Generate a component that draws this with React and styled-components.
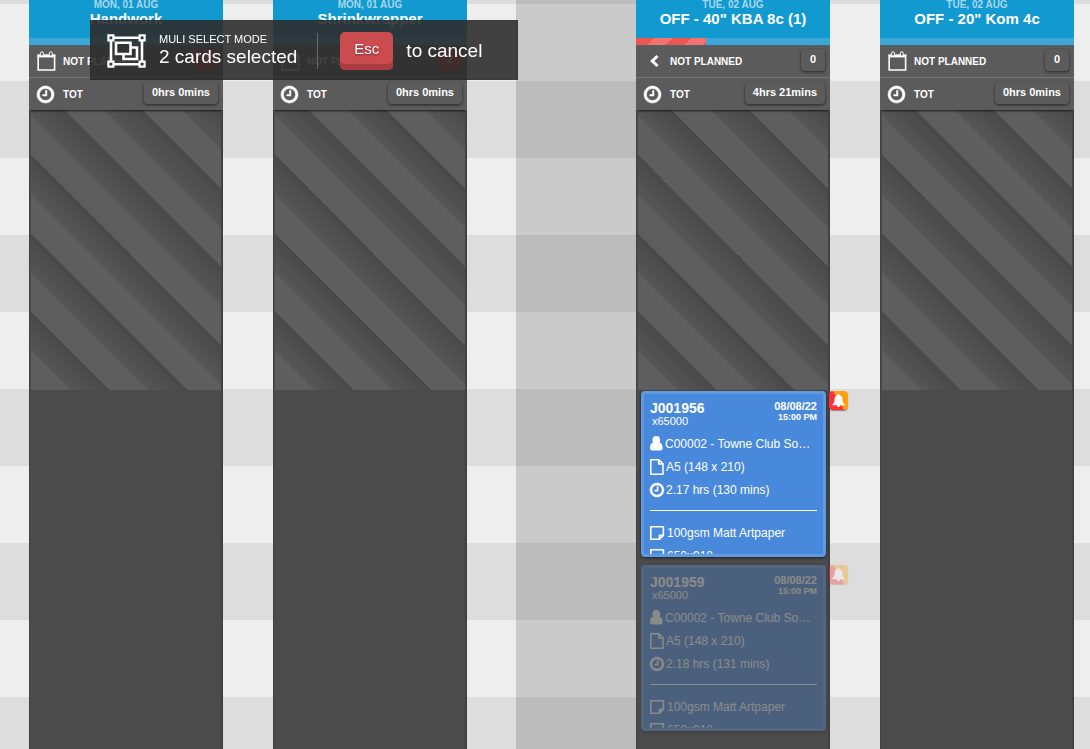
import React from "react";
import styled, { createGlobalStyle } from "styled-components";

const GlobalStyle = createGlobalStyle`
  * {
    box-sizing: border-box;
  }
  body {
    margin: 0;
    font-family: "Liberation Sans", Arial, sans-serif;
    color: white;
  }
`;

const Board = styled.main`
  display: flex;
  min-height: 100vh;
  padding: 0 16px 0 29px;
  overflow: hidden;
  background: repeating-linear-gradient(#ddd 0 77px, #eee 77px 154px) 0 -73px /
    100% calc(100% + 73px);
`;

const Column = styled.section`
  flex: 1 0 194px;
  display: flex;
  flex-direction: column;
  margin-right: ${(props) => props.$gap || 0}px;
  background-color: #4b4b4b;
`;

const DayGap = styled.div`
  flex: 0 0 120px;
  background-color: rgba(0, 0, 0, 0.15);
`;

const ColumnHeader = styled.header`
  height: 38px;
  text-align: center;
  background-color: #1199d0;
`;

const ColumnDate = styled.div`
  font-size: 10px;
  font-weight: bold;
  line-height: 10px;
  color: #a5d8ee;
`;

const ColumnTitle = styled.h2`
  margin: 0;
  font-size: 15px;
  line-height: 18px;
`;

const Progress = styled.div`
  height: 8px;
  background-color: #3da8d8;
  border-bottom: 1px solid #4a6470;
`;

const ProgressBar = styled.div`
  height: 7px;
  background: repeating-linear-gradient(
    135deg,
    #f0544f 0 13px,
    #f5736e 13px 26px
  );
`;

const Summary = styled.div`
  position: relative;
  background-color: #5b5b5b;
  box-shadow: 0 3px 2px -2px rgba(0, 0, 0, 0.7);
`;

const SummaryRow = styled.div`
  display: flex;
  height: 31px;
  padding: 3px 5px 0 8px;
  font-size: 10px;
  font-weight: bold;
  line-height: 25px;

  & + & {
    height: 33px;
    padding-top: 4px;
    border-top: 1px solid #757575;
  }
`;

const SummaryIcon = styled.span`
  display: flex;
  align-items: center;
  width: 26px;
  height: 24px;
`;

const Badge = styled.span`
  min-width: 24px;
  height: 22px;
  margin-left: auto;
  padding: 0 8px;
  border-radius: 4px;
  font-size: 11px;
  line-height: 20px;
  text-align: center;
  background-color: ${(props) => (props.$alert ? "#e02020" : "#5b5b5b")};
  box-shadow: 0 1px 3px rgba(0, 0, 0, 0.6);
`;

const ColumnBody = styled.div`
  flex: 1;
  border: 1px solid #414141;
  border-width: 0 2px 0 1px;
`;

const Unavailable = styled.div`
  height: 280px;
  margin-left: 1px;
  background: repeating-linear-gradient(
    45deg,
    #5e5e5e 0,
    #5e5e5e calc(100% / 12),
    #565656 calc(100% / 12),
    #494949 calc(100% / 6)
  );
`;

const Cards = styled.div`
  display: flex;
  flex-direction: column;
  gap: 8px;
  padding: 1px 2px 18px 4px;
`;

const CardWrap = styled.article`
  position: relative;
  opacity: ${(props) => (props.$faded ? 0.35 : 1)};
`;

const CardBox = styled.div`
  height: 166px;
  padding: 6px;
  overflow: hidden;
  border: 3px solid #5f9ae3;
  border-radius: 4px;
  background-color: #4989db;
  box-shadow: 0 1px 3px rgba(0, 0, 0, 0.6);
`;

const CardTop = styled.div`
  display: flex;
  justify-content: space-between;
  height: 32px;
`;

const JobNumber = styled.h3`
  margin: 0;
  font-size: 14px;
  line-height: 16px;
`;

const Quantity = styled.div`
  padding-left: 2px;
  font-size: 11px;
  line-height: 11px;
`;

const Due = styled.div`
  font-size: 11px;
  font-weight: bold;
  line-height: 12px;
  text-align: right;
`;

const DueTime = styled.div`
  font-size: 9px;
  line-height: 10px;
`;

const CardLine = styled.div`
  display: flex;
  align-items: center;
  gap: 2px;
  height: 23px;
  font-size: 12px;
  white-space: nowrap;
`;

const Rule = styled.hr`
  height: 1px;
  margin: 9px 0 10px;
  border: 0;
  background-color: white;
`;

const Alarm = styled.button`
  position: absolute;
  top: 0;
  left: calc(100% + 3px);
  display: flex;
  align-items: center;
  justify-content: center;
  width: 19px;
  height: 19px;
  padding: 0;
  border: 0;
  border-radius: 4px;
  background: linear-gradient(60deg, #ff3038 50%, #ffa012 50%);
  box-shadow: 0 1px 1px rgba(0, 0, 0, 0.4);
`;

const Toast = styled.div`
  position: fixed;
  top: 20px;
  left: 90px;
  z-index: 2;
  display: flex;
  align-items: center;
  width: 428px;
  height: 60px;
  padding: 2px 17px 0;
  background-color: rgba(45, 45, 45, 0.9);
  box-shadow: inset 0 0 1px rgba(0, 0, 0, 0.8);
`;

const ToastText = styled.div`
  margin-left: 13px;
  padding-right: 20px;
  border-right: 1px solid #6a6a6a;
`;

const ToastMode = styled.div`
  font-size: 11px;
  line-height: 12px;
`;

const ToastCount = styled.div`
  font-size: 19px;
  line-height: 24px;
  white-space: nowrap;
`;

const EscKey = styled.button`
  width: 53px;
  height: 38px;
  margin: 0 13px 0 22px;
  padding: 0 0 6px;
  border: 0;
  border-radius: 5px;
  font-family: inherit;
  font-size: 15px;
  color: white;
  text-shadow: 0 1px 2px rgba(0, 0, 0, 0.5);
  background-color: #ca4c4f;
  box-shadow: inset 0 -6px 0 #ab3b3f;
`;

const ToastHint = styled.span`
  font-size: 19px;
`;

const ClockIcon = ({ size }) => (
  <svg
    width={size}
    height={size}
    viewBox="128 128 1536 1536"
    fill="currentColor"
    stroke="currentColor"
    strokeWidth="50"
    overflow="visible"
  >
    <path d="M1024 544v448q0 14-9 23t-23 9h-320q-14 0-23-9t-9-23v-64q0-14 9-23t23-9h224v-352q0-14 9-23t23-9h64q14 0 23 9t9 23zm416 352q0-148-73-273t-198-198-273-73-273 73-198 198-73 273 73 273 198 198 273 73 273-73 198-198 73-273zm224 0q0 209-103 385.5t-279.5 279.5-385.5 103-385.5-103-279.5-279.5-103-385.5 103-385.5 279.5-279.5 385.5-103 385.5 103 279.5 279.5 103 385.5z" />
  </svg>
);

const CalendarIcon = () => (
  <svg width="19" height="20" viewBox="0 0 19 20" fill="none" stroke="currentColor">
    <path d="M1.2 4.500h16.400v14.500H1.200z" strokeWidth="1.6" />
    <path d="M.5 3.400h17.800v3H.5z" fill="currentColor" stroke="none" />
    <rect x="3.6" y="0.8" width="2.8" height="4.2" rx="1.3" fill="#5b5b5b" />
    <rect x="12.4" y="0.8" width="2.8" height="4.2" rx="1.3" fill="#5b5b5b" />
  </svg>
);

const ChevronIcon = () => (
  <svg width="19" height="14" viewBox="0 0 19 14" fill="none" stroke="currentColor">
    <path d="M13.500 2 8.300 7l5.200 5" strokeWidth="3" />
  </svg>
);

const UserIcon = () => (
  <svg width="13" height="15" viewBox="0 0 13 15" fill="currentColor">
    <ellipse cx="6.3" cy="4.3" rx="3.8" ry="4.2" />
    <path d="M3 6.800c-2.200.3-3 2.700-3 5.200C0 13.600.8 14.400 2.200 14.400h8.200c1.400 0 2.200-.8 2.200-2.400 0-2.500-.8-4.900-3-5.200-1.800 1.700-4.800 1.700-6.600 0z" />
  </svg>
);

const FileIcon = () => (
  <svg width="14" height="16" viewBox="0 0 14 16" fill="none" stroke="currentColor" strokeWidth="1.5" strokeLinejoin="round">
    <path d="M.8.8h8l4.200 4.100v10.300H.8zM8.700.8v4.300H13" />
  </svg>
);

const NoteIcon = () => (
  <svg width="15" height="14" viewBox="0 0 15 14" fill="none" stroke="currentColor" strokeWidth="1.6" strokeLinejoin="round">
    <path d="M.8.8h12.600v8.600l-4 3.800H.8zM13.200 9.400H9.400v3.800" />
  </svg>
);

const BellIcon = () => (
  <svg width="13" height="14" viewBox="0 0 13 14" fill="white">
    <path d="M6.500 0c.7 0 1 .5 1 1 1.900.5 2.900 2 2.900 4 0 3 .9 4.300 2.100 5.300v.9H.5v-.9C1.700 9.300 2.600 8 2.600 5c0-2 1-3.500 2.900-4 0-.5.3-1 1-1zM4.900 11.200h3.200c0 1.300-.7 1.900-1.600 1.900s-1.600-.6-1.600-1.900z" />
  </svg>
);

const GroupIcon = () => (
  <svg width="39" height="34" viewBox="0 0 39 34" fill="none" stroke="currentColor" strokeWidth="2.6">
    <path d="M7 3.800h25M7 30.200h25M4 7v20M35 7v20" />
    <path d="M1.400 1.400h5v5h-5zM32.600 1.400h5v5h-5zM1.400 27.600h5v5h-5zM32.600 27.600h5v5h-5z" strokeWidth="2.2" />
    <path d="M9 8.700h14.500v11.300H9zM23.500 13.500h6.500v11.500H16.500v-5" />
  </svg>
);

const columns = [
  { date: "MON, 01 AUG", title: "Handwork", planned: 2, alert: true, total: "0hrs 0mins", gap: 50 },
  { date: "MON, 01 AUG", title: "Shrinkwrapper", planned: 2, alert: true, total: "0hrs 0mins", gap: 49, dayEnd: true },
  {
    date: "TUE, 02 AUG",
    title: 'OFF - 40" KBA 8c (1)',
    planned: 0,
    total: "4hrs 21mins",
    gap: 50,
    progress: 36,
    back: true,
    cards: [
      { job: "J001956", hours: "2.17 hrs (130 mins)" },
      { job: "J001959", hours: "2.18 hrs (131 mins)", faded: true },
    ],
  },
  { date: "TUE, 02 AUG", title: 'OFF - 20" Kom 4c', planned: 0, total: "0hrs 0mins" },
];

const JobCard = ({ card }) => (
  <CardWrap $faded={card.faded}>
    <CardBox>
      <CardTop>
        <div>
          <JobNumber>{card.job}</JobNumber>
          <Quantity>x65000</Quantity>
        </div>
        <Due>
          08/08/22
          <DueTime>15:00 PM</DueTime>
        </Due>
      </CardTop>
      <CardLine>
        <UserIcon /> C00002 - Towne Club So…
      </CardLine>
      <CardLine>
        <FileIcon /> A5 (148 x 210)
      </CardLine>
      <CardLine>
        <ClockIcon size={14} /> {card.hours}
      </CardLine>
      <Rule />
      <CardLine>
        <NoteIcon /> 100gsm Matt Artpaper
      </CardLine>
      <CardLine>
        <NoteIcon /> 650x910
      </CardLine>
    </CardBox>
    <Alarm aria-label="Job alert">
      <BellIcon />
    </Alarm>
  </CardWrap>
);

const App = () => {
  return (
    <>
      <GlobalStyle />
      <Board>
        {columns.map((column) => (
          <React.Fragment key={column.title}>
            <Column $gap={column.gap}>
              <ColumnHeader>
                <ColumnDate>{column.date}</ColumnDate>
                <ColumnTitle>{column.title}</ColumnTitle>
              </ColumnHeader>
              <Progress>
                {column.progress && (
                  <ProgressBar style={{ width: `${column.progress}%` }} />
                )}
              </Progress>
              <Summary>
                <SummaryRow>
                  <SummaryIcon>
                    {column.back ? <ChevronIcon /> : <CalendarIcon />}
                  </SummaryIcon>
                  NOT PLANNED
                  <Badge $alert={column.alert}>{column.planned}</Badge>
                </SummaryRow>
                <SummaryRow>
                  <SummaryIcon>
                    <ClockIcon size={17} />
                  </SummaryIcon>
                  TOT
                  <Badge>{column.total}</Badge>
                </SummaryRow>
              </Summary>
              <ColumnBody>
                <Unavailable />
                {column.cards && (
                  <Cards>
                    {column.cards.map((card) => (
                      <JobCard key={card.job} card={card} />
                    ))}
                  </Cards>
                )}
              </ColumnBody>
            </Column>
            {column.dayEnd && <DayGap />}
          </React.Fragment>
        ))}
      </Board>
      <Toast role="status">
        <GroupIcon />
        <ToastText>
          <ToastMode>MULI SELECT MODE</ToastMode>
          <ToastCount>2 cards selected</ToastCount>
        </ToastText>
        <EscKey>Esc</EscKey>
        <ToastHint>to cancel</ToastHint>
      </Toast>
    </>
  );
};

export default App;
